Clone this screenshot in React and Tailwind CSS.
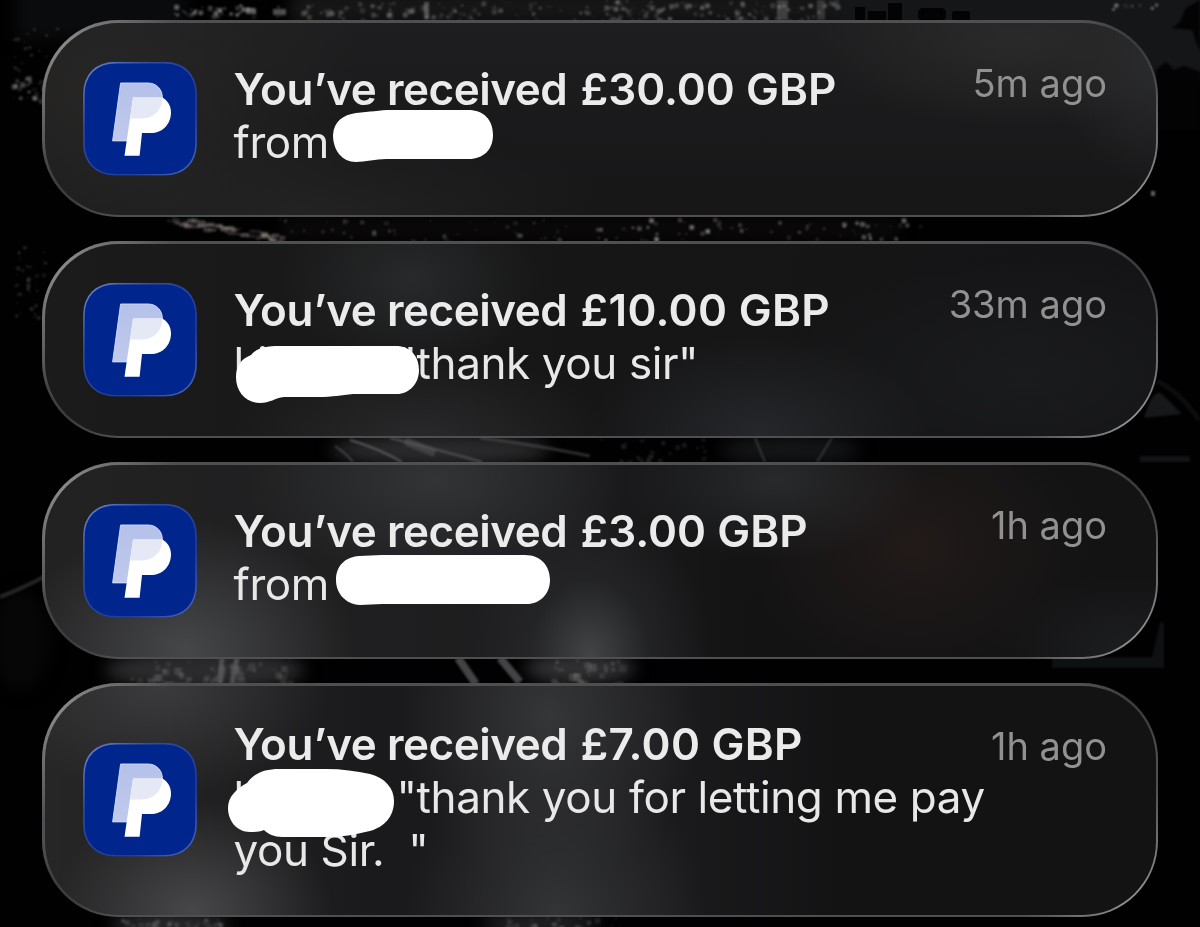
import React from "react";

// Small seeded generator so the city lights are the same on every load.
function makeRandom(seed) {
  let s = seed;
  return () => {
    s = (s * 1664525 + 1013904223) % 4294967296;
    return s / 4294967296;
  };
}

function scatter(seed, count, x, y, w, h, size, max) {
  const r = makeRandom(seed);
  return Array.from({ length: count }, () => ({
    x: x + r() * w,
    y: y + r() * h,
    s: 1.2 + r() * size,
    o: 0.1 + r() * max,
  }));
}

const LIGHTS = [
  ...scatter(3, 40, 170, 4, 120, 12, 4, 0.4),
  ...scatter(5, 110, 300, 0, 320, 20, 4, 0.26),
  ...scatter(7, 110, 600, 0, 240, 20, 4, 0.26),
  ...scatter(9, 12, 1110, 3, 55, 6, 3, 0.4),
  ...scatter(11, 22, 12, 25, 46, 60, 2.6, 0.3),
  ...scatter(13, 22, 10, 76, 32, 24, 4.4, 0.4),
  ...scatter(17, 50, 270, 218, 330, 22, 3.4, 0.3),
  ...scatter(19, 62, 600, 218, 320, 22, 3.8, 0.45),
  ...scatter(23, 40, 14, 240, 30, 80, 3, 0.14),
  ...scatter(29, 30, 590, 438, 120, 24, 4, 0.08),
  ...scatter(31, 60, 130, 659, 160, 24, 7, 0.08),
  ...scatter(37, 40, 550, 659, 80, 24, 7, 0.08),
  ...scatter(41, 40, 120, 917, 100, 10, 5, 0.1),
  ...scatter(43, 30, 500, 917, 120, 10, 5, 0.08),
];

const roadRandom = makeRandom(517);
const ROAD = Array.from({ length: 75 }, () => {
  const t = roadRandom();
  return {
    x: 165 + t * 115,
    y: 213 + t * 22 + roadRandom() * 8,
    s: 1.2 + roadRandom() * 3,
    o: 0.1 + roadRandom() * 0.4,
  };
});

function Wallpaper() {
  return (
    <svg className="absolute inset-0 h-full w-full" viewBox="0 0 1200 927" aria-hidden="true">
      <defs>
        <filter id="soft" colorInterpolationFilters="sRGB"><feGaussianBlur stdDeviation="0.9" /></filter>
        <filter id="haze" x="-30%" y="-60%" width="160%" height="220%" colorInterpolationFilters="sRGB"><feGaussianBlur stdDeviation="8" /></filter>
      </defs>
      <rect width="1200" height="927" fill="#010102" />
      <g filter="url(#haze)">
        <rect x="290" y="-10" width="560" height="34" fill="#161617" />
        <rect x="840" y="-30" width="400" height="110" fill="#151618" />
        <rect x="15" y="-20" width="170" height="60" fill="#0a0b0c" />
        <rect x="280" y="218" width="620" height="22" fill="#0b0909" />
        <ellipse cx="440" cy="450" rx="110" ry="16" fill="#2a2a2c" />
        <ellipse cx="790" cy="450" rx="70" ry="14" fill="#141517" />
        <ellipse cx="205" cy="670" rx="100" ry="20" fill="#2b2b2d" />
        <ellipse cx="580" cy="668" rx="55" ry="16" fill="#303032" />
        <ellipse cx="170" cy="924" rx="60" ry="10" fill="#2f2f31" />
        <ellipse cx="540" cy="924" rx="60" ry="10" fill="#252527" />
        <ellipse cx="20" cy="640" rx="30" ry="50" fill="#060607" />
      </g>
      <g fill="#030304">
        <rect x="855" y="7" width="10" height="14" />
        <rect x="888" y="3" width="14" height="18" />
        <rect x="868" y="11" width="18" height="10" />
        <rect x="918" y="8" width="28" height="13" rx="5" />
        <rect x="952" y="11" width="18" height="10" rx="3" />
      </g>
      <g fill="#030304" filter="url(#soft)">
        <path d="M1172 28 1180 22 1186 8 1200 0V52L1192 30Z" />
        <path d="M1156 70 1166 62 1174 70 1184 66 1200 72V130H1158Z" />
      </g>
      <g filter="url(#soft)" fill="#c2bfbc">
        {LIGHTS.map((p, i) => (
          <rect key={i} x={p.x} y={p.y} width={p.s} height={p.s} rx="0.8" opacity={p.o} />
        ))}
        <rect x="424" y="2" width="5" height="17" opacity="0.35" />
        <rect x="777" y="0" width="11" height="20" opacity="0.25" />
        <rect x="817" y="0" width="8" height="20" opacity="0.2" />
        <rect x="273" y="9" width="13" height="6" opacity="0.4" />
        <rect x="246" y="8" width="10" height="6" opacity="0.45" />
        <rect x="1151" y="191" width="4" height="5" opacity="0.5" />
      </g>
      <g filter="url(#soft)" fill="#a69a94">
        {ROAD.map((p, i) => (
          <rect key={i} x={p.x} y={p.y} width={p.s * 2} height={p.s} rx="1" opacity={p.o} />
        ))}
      </g>
      <g filter="url(#soft)" fill="none" stroke="#59595c">
        <path d="M335 446Q347 454 353 462" strokeWidth="1.2" />
        <path d="M350 440Q380 449 402 462" strokeWidth="2" />
        <path d="M390 438Q440 450 482 462" strokeWidth="2.5" opacity="0.7" />
        <path d="M405 441 435 453" strokeWidth="8" opacity="0.5" />
        <path d="M480 438Q530 444 590 456" strokeWidth="3" opacity="0.5" />
        <path d="M755 438 765 462M832 438 817 462" strokeWidth="2" opacity="0.5" />
        <path d="M458 658 476 684M500 658 520 682" strokeWidth="8" opacity="0.75" />
        <path d="M222 658 220 684M237 658 232 684" strokeWidth="5" opacity="0.8" />
        <path d="M0 597Q18 590 44 577" strokeWidth="4" opacity="0.4" />
        <path d="M1157 381Q1180 392 1199 420" strokeWidth="5" opacity="0.15" />
      </g>
      <path d="M1144 418Q1154 384 1164 396L1182 414Z" fill="#17181a" filter="url(#soft)" />
      <rect x="1140" y="456" width="50" height="6" fill="#131415" filter="url(#soft)" />
      <path d="M1052 657H1152L1160 622H1164V668H1052Z" fill="#0f1012" filter="url(#soft)" />
    </svg>
  );
}

function AppIcon() {
  return (
    <svg className="-ml-[0.5px] h-[114px] w-[114px] shrink-0 -translate-y-[0.3px]" viewBox="0 0 114 114" role="img" aria-label="PayPal">
      <defs>
        <linearGradient id="rim" x1="0" y1="0" x2="1" y2="1">
          <stop offset="0" stopColor="#6e86c8" />
          <stop offset="0.3" stopColor="#304a9f" />
          <stop offset="0.7" stopColor="#203c9b" />
          <stop offset="1" stopColor="#5068b4" />
        </linearGradient>
        <linearGradient id="backP" x1="0" y1="0" x2="0" y2="1">
          <stop offset="0" stopColor="#b5c1e9" />
          <stop offset="1" stopColor="#bfc9ec" />
        </linearGradient>
      </defs>
      <path
        d="M33 .9H81C101 .9 113.100 13 113.100 33V81C113.100 101 101 113.100 81 113.100H33C13 113.100 .9 101 .9 81V33C.9 13 13 .9 33 .9Z"
        fill="#00268e"
        stroke="url(#rim)"
        strokeWidth="1.6"
      />
      <path d="M37.600 21.300H65C73.500 21.300 79.400 27.500 79.400 36C79.400 48 71 57 58 57H48L44.500 79.200H29.600Z" fill="url(#backP)" stroke="#d3dcf5" strokeWidth="0.9" />
      <path d="M50 35.900H79.300C85 39 88 44.500 88 50.500C88 62.500 79.500 71.300 67.500 71.300H59L56.600 94H41.500Z" fill="#fff" />
      <path d="M50 35.900H79.300C79.300 48 71 56.800 58.500 56.800H47.200Z" fill="#e5e8f5" />
    </svg>
  );
}

const GLOW = {
  first:
    "bg-[radial-gradient(200px_90px_at_970px_15px,#2c2b2bee,transparent),radial-gradient(110px_120px_at_1116px_40px,#2a2b2d,transparent),radial-gradient(260px_240px_at_60px_70px,#272625,transparent),radial-gradient(300px_90px_at_270px_190px,#232223,transparent),linear-gradient(#1e1e20,#161617)]",
  second:
    "bg-[radial-gradient(130px_90px_at_365px_35px,#27292a,transparent),radial-gradient(190px_90px_at_375px_196px,#29292b,transparent),radial-gradient(170px_100px_at_715px_190px,#25272a,transparent),radial-gradient(240px_120px_at_980px_130px,#1a1b1d,transparent),linear-gradient(90deg,#1b1b1b,#161617_50%,#141416)]",
  third:
    "bg-[radial-gradient(170px_130px_at_140px_185px,#464749,transparent),radial-gradient(120px_150px_at_545px_190px,#434446,#2a2b2d88_50%,transparent),radial-gradient(190px_100px_at_390px_15px,#323436,transparent),radial-gradient(150px_80px_at_730px_15px,#282a2c,transparent),radial-gradient(180px_140px_at_870px_80px,#211a19,transparent),radial-gradient(130px_70px_at_1080px_180px,#1c1d1f,transparent),linear-gradient(90deg,#222223,#1d1d1f_45%,#131314_64%,#131314)]",
  fourth:
    "bg-[radial-gradient(170px_110px_at_115px_0px,#3b3b3d,transparent),radial-gradient(140px_110px_at_148px_225px,#474749,transparent),radial-gradient(150px_170px_at_505px_30px,#353638,transparent),radial-gradient(150px_150px_at_512px_225px,#333436,transparent),linear-gradient(90deg,#262627,#1a1a1c_30%,#1b1b1d_55%,#131314_72%,#131314)]",
};

const RIM =
  "bg-[radial-gradient(110px_110px_at_25px_30px,#8c8c8d,transparent),radial-gradient(110px_110px_at_1090px_calc(100%-25px),#949495,transparent),radial-gradient(70px_70px_at_100%_0,#2c2c2e,transparent),radial-gradient(70px_70px_at_0_100%,#2c2c2e,transparent),linear-gradient(#4f4f51,#4f4f51)]";

function Notification({ amount, time, height, glow, titleClass, amountClass, children, cover }) {
  return (
    <article className={`w-[1116px] rounded-[76px] p-[2.5px] ${RIM} ${height}`}>
      <div className={`relative flex h-full items-center rounded-[73.5px] pr-[49px] pl-[39px] ${glow}`}>
        <AppIcon />
        <div className="ml-[36.5px] min-w-0 flex-1 self-start">
          {children}
        </div>
        <time className="absolute top-[37px] right-[48.5px] text-[38px] leading-[46px] whitespace-nowrap text-[#919192]">{time}</time>
        <h2 className={`absolute left-[189px] text-[44px] leading-[54px] font-semibold whitespace-nowrap text-[#ebebec] ${titleClass}`}>
          <span className="inline-block w-[347px] tracking-[-0.48px]">You’ve received</span>
          <span className={amountClass}>{amount}</span>
        </h2>
        <svg className="absolute top-[-2.5px] left-[-2.5px] h-[234px] w-[1116px]" viewBox="0 0 1116 234" aria-hidden="true">
          <path d={cover} fill="#fff" />
        </svg>
      </div>
    </article>
  );
}

const BODY = "text-[44px] leading-[53.6px] tracking-[-0.4px] whitespace-pre text-[#e8e8e9]";

export default function App() {
  return (
    <main className="relative h-[927px] w-[1200px] overflow-hidden bg-black font-['Inter',sans-serif]">
      <Wallpaper />
      <div className="relative flex flex-col items-center gap-[24px] pt-[20px]">
        <Notification
          amount="£30.00 GBP"
          time="5m ago"
          height="h-[197px]"
          glow={GLOW.first}
          titleClass="top-[39px]"
          amountClass="tracking-normal"
          cover="M291 115C292 101 301 95 314 93C328 92 337 90 350 90H426C442 90 451 100 451 115C451 130 441 139 427 139H344C334 139 323 142 314 142C300 142 291 130 291 115Z"
        >
          <p className={`mt-[93px] ${BODY}`}>from</p>
        </Notification>
        <Notification
          amount="£10.00 GBP"
          time="33m ago"
          height="h-[197px]"
          glow={GLOW.second}
          titleClass="top-[39px]"
          amountClass="tracking-[0.3px]"
          cover="M194 136C194 125 199 118 209 114C216 105 229 105 242 105H354C368 105 377 115 377 129C377 143 367 153 355 153H311C299 154 291 156 276 156H242C233 157 228 162 218 162C204 162 194 151 194 136Z"
        >
          <p className={`mt-[93px] ${BODY}`}><span className="inline-block w-[163px]">ki</span>"thank you sir"</p>
        </Notification>
        <Notification
          amount="£3.00 GBP"
          time="1h ago"
          height="h-[197px]"
          glow={GLOW.third}
          titleClass="top-[39px]"
          amountClass="tracking-normal"
          cover="M294 118C294 104 303 95 317 94L340 93H483C499 93 508 104 508 118C508 132 498 142 485 142H340L318 143C303 142 294 131 294 118Z"
        >
          <p className={`mt-[93px] ${BODY}`}>from</p>
        </Notification>
        <Notification
          amount="£7.00 GBP"
          time="1h ago"
          height="h-[234px]"
          glow={GLOW.fourth}
          titleClass="top-[31px]"
          amountClass="tracking-[0.25px]"
          cover="M186 125C186 114 194 106 205 100C212 90 223 86 237 86H284C300 86 314 88 328 91C343 95 352 105 352 118C352 134 342 144 328 148C315 151 306 153 292 154H240C232 154 226 151 222 147C217 149 213 149 208 149C195 149 186 138 186 125Z"
        >
          <p className={`mt-[85px] ${BODY}`}><span className="inline-block w-[163px]">ki</span>"thank you for letting me pay{"\n"}you Sir.  "</p>
        </Notification>
      </div>
    </main>
  );
}
